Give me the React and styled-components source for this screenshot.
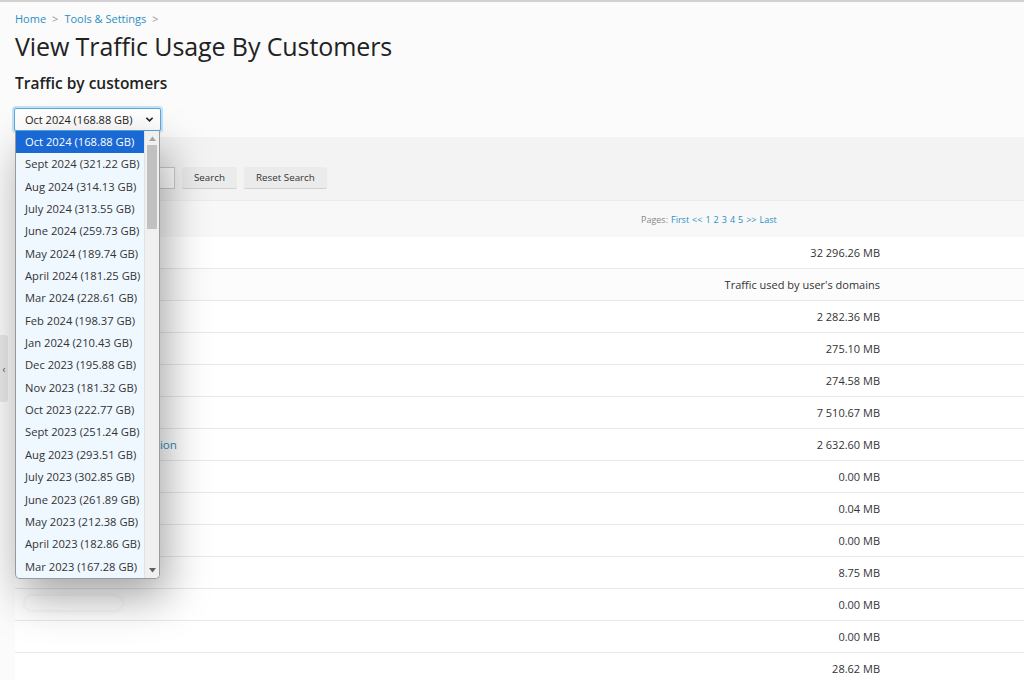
import React from "react";
import styled, { createGlobalStyle } from "styled-components";

const GlobalStyle = createGlobalStyle`
  html, body {
    margin: 0;
    padding: 0;
    background: #fbfbfb;
    font-family: "Open Sans", "DejaVu Sans", sans-serif;
    color: #222;
  }
`;

const months = [
  "Oct 2024 (168.88 GB)",
  "Sept 2024 (321.22 GB)",
  "Aug 2024 (314.13 GB)",
  "July 2024 (313.55 GB)",
  "June 2024 (259.73 GB)",
  "May 2024 (189.74 GB)",
  "April 2024 (181.25 GB)",
  "Mar 2024 (228.61 GB)",
  "Feb 2024 (198.37 GB)",
  "Jan 2024 (210.43 GB)",
  "Dec 2023 (195.88 GB)",
  "Nov 2023 (181.32 GB)",
  "Oct 2023 (222.77 GB)",
  "Sept 2023 (251.24 GB)",
  "Aug 2023 (293.51 GB)",
  "July 2023 (302.85 GB)",
  "June 2023 (261.89 GB)",
  "May 2023 (212.38 GB)",
  "April 2023 (182.86 GB)",
  "Mar 2023 (167.28 GB)",
];

const rows = [
  { value: "32 296.26 MB" },
  { value: "Traffic used by user's domains", head: true },
  { value: "2 282.36 MB" },
  { value: "275.10 MB" },
  { value: "274.58 MB" },
  { value: "7 510.67 MB" },
  { value: "2 632.60 MB", link: "Web Hosting Administration" },
  { value: "0.00 MB" },
  { value: "0.04 MB" },
  { value: "0.00 MB" },
  { value: "8.75 MB" },
  { value: "0.00 MB", hidden: true },
  { value: "0.00 MB" },
  { value: "28.62 MB" },
];

const Page = styled.div`
  position: relative;
  height: 680px;
  overflow: hidden;
  border-top: 2px solid #d2d2d2;
  box-sizing: border-box;
`;

const Header = styled.div`
  padding: 9px 15px 0;
`;

const Crumbs = styled.nav`
  display: flex;
  align-items: center;
  gap: 6px;
  font-size: 11px;
  line-height: 16px;
  a {
    color: #2a8fc4;
    text-decoration: none;
  }
  span {
    color: #999;
    font-size: 11px;
  }
`;

const Title = styled.h1`
  margin: 2px 0 0;
  font-size: 25px;
  font-weight: 400;
  line-height: 34px;
  color: #222;
  letter-spacing: -0.1px;
`;

const Subtitle = styled.h2`
  margin: 9px 0 0;
  font-size: 15.5px;
  font-weight: 600;
  line-height: 22px;
  color: #222;
`;

const SelectWrap = styled.div`
  position: relative;
  width: 147px;
  margin-top: 14px;
  margin-left: -1px;
  z-index: 5;
`;

const SelectBox = styled.div`
  box-sizing: border-box;
  height: 23px;
  display: flex;
  align-items: center;
  justify-content: space-between;
  padding: 0 6px 0 10px;
  font-size: 11px;
  color: #222;
  background: #fff;
  border: 1px solid #5aa8dc;
  border-radius: 2px;
  box-shadow: 0 0 0 2px #c4e2f6;
`;

const Chevron = styled.svg`
  width: 9px;
  height: 9px;
`;

const DropList = styled.div`
  position: absolute;
  top: 23px;
  left: 1px;
  width: 145px;
  box-sizing: border-box;
  display: flex;
  background: #f0f8ff;
  border: 1px solid #9a9a9a;
  border-top: none;
  border-radius: 0 0 5px 5px;
  overflow: hidden;
  box-shadow: 6px 18px 44px rgba(0, 0, 0, 0.36);
`;

const Options = styled.ul`
  list-style: none;
  margin: 0;
  padding: 0;
  flex: 1;
`;

const Option = styled.li`
  height: 22.35px;
  line-height: 22.35px;
  padding-left: 9px;
  font-size: 11.2px;
  white-space: nowrap;
  color: ${(p) => (p.$selected ? "#fff" : "#333")};
  background: ${(p) => (p.$selected ? "#1a68d4" : "transparent")};
`;

const Scrollbar = styled.div`
  width: 14px;
  display: flex;
  flex-direction: column;
  align-items: center;
  background: #f0f0f0;
  border-left: 1px solid #e2e2e2;
`;

const Arrow = styled.div`
  height: 14px;
  display: flex;
  align-items: center;
  justify-content: center;
  svg {
    width: 7px;
    height: 5px;
  }
`;

const Track = styled.div`
  flex: 1;
  width: 100%;
  display: flex;
  justify-content: center;
`;

const Thumb = styled.div`
  width: 10px;
  height: 84px;
  background: #c1c1c1;
`;

const SideTab = styled.div`
  position: absolute;
  left: 0;
  top: 333px;
  width: 8px;
  height: 67px;
  background: #e9e9e9;
  border-radius: 0 3px 3px 0;
  display: flex;
  align-items: center;
  justify-content: center;
  font-size: 11px;
  color: #666;
  z-index: 3;
`;

const Content = styled.div`
  margin: 6px 0 0 15px;
`;

const SearchBar = styled.div`
  display: flex;
  align-items: flex-start;
  gap: 6px;
  height: 63px;
  box-sizing: border-box;
  padding: 30px 0 0 0;
  background: #f3f3f3;
`;

const SearchInput = styled.div`
  width: 160px;
  height: 22px;
  box-sizing: border-box;
  background: #fff;
  border: 1px solid #ccc;
`;

const Button = styled.button`
  height: 22px;
  padding: 0 12px;
  margin-left: 1px;
  font-family: "Open Sans", sans-serif;
  font-size: 9.8px;
  color: #333;
  background: #ebebeb;
  border: none;
  border-bottom: 1px solid #d0d0d0;
  border-radius: 2px;
`;

const Pager = styled.div`
  height: 37px;
  display: flex;
  align-items: center;
  padding-left: 626px;
  gap: 3px;
  font-size: 9px;
  color: #888;
  background: #f8f8f8;
  border-top: 1px solid #ececec;
  box-sizing: border-box;
  a {
    color: #2a8fc4;
    text-decoration: none;
  }
`;

const Row = styled.div`
  display: flex;
  align-items: center;
  justify-content: space-between;
  height: 32px;
  box-sizing: border-box;
  padding: 0 144px 0 10px;
  font-size: 11px;
  color: #333;
  background: ${(p) => (p.$head ? "#fcfcfc" : "#fff")};
  border-bottom: 1px solid #e8e8e8;
`;

const NameLink = styled.a`
  color: #2a8fc4;
  text-decoration: none;
  font-size: 11.6px;
`;

const Redacted = styled.span`
  display: inline-block;
  width: 97px;
  height: 14px;
  border-radius: 7px;
  background: #fff;
  box-shadow: 0 0 5px rgba(0, 0, 0, 0.08);
`;

export default function App() {
  return (
    <>
      <GlobalStyle />
      <Page>
        <Header>
          <Crumbs>
            <a href="#">Home</a>
            <span>&gt;</span>
            <a href="#">Tools &amp; Settings</a>
            <span>&gt;</span>
          </Crumbs>
          <Title>View Traffic Usage By Customers</Title>
          <Subtitle>Traffic by customers</Subtitle>
          <SelectWrap>
            <SelectBox>
              {months[0]}
              <Chevron viewBox="0 0 10 10">
                <path d="M1.5 3 L5 6.5 L8.5 3" fill="none" stroke="#222" strokeWidth="1.8" />
              </Chevron>
            </SelectBox>
            <DropList>
              <Options>
                {months.map((m, i) => (
                  <Option key={m} $selected={i === 0}>
                    {m}
                  </Option>
                ))}
              </Options>
              <Scrollbar>
                <Arrow>
                  <svg viewBox="0 0 7 5">
                    <path d="M0 5 L3.5 0.5 L7 5 Z" fill="#a3a3a3" />
                  </svg>
                </Arrow>
                <Track>
                  <Thumb />
                </Track>
                <Arrow>
                  <svg viewBox="0 0 7 5">
                    <path d="M0 0 L3.5 4.5 L7 0 Z" fill="#606060" />
                  </svg>
                </Arrow>
              </Scrollbar>
            </DropList>
          </SelectWrap>
        </Header>
        <SideTab>‹</SideTab>
        <Content>
          <SearchBar>
            <SearchInput />
            <Button>Search</Button>
            <Button>Reset Search</Button>
          </SearchBar>
          <Pager>
            Pages: <a href="#">First</a> <a href="#">&lt;&lt;</a> <a href="#">1</a>
            <a href="#">2</a> <a href="#">3</a> <a href="#">4</a> <a href="#">5</a>
            <a href="#">&gt;&gt;</a> <a href="#">Last</a>
          </Pager>
          {rows.map((r, i) => (
            <Row key={i} $head={r.head}>
              <span>
                {r.link && <NameLink href="#">{r.link}</NameLink>}
                {r.hidden && <Redacted />}
              </span>
              <span>{r.value}</span>
            </Row>
          ))}
        </Content>
      </Page>
    </>
  );
}
